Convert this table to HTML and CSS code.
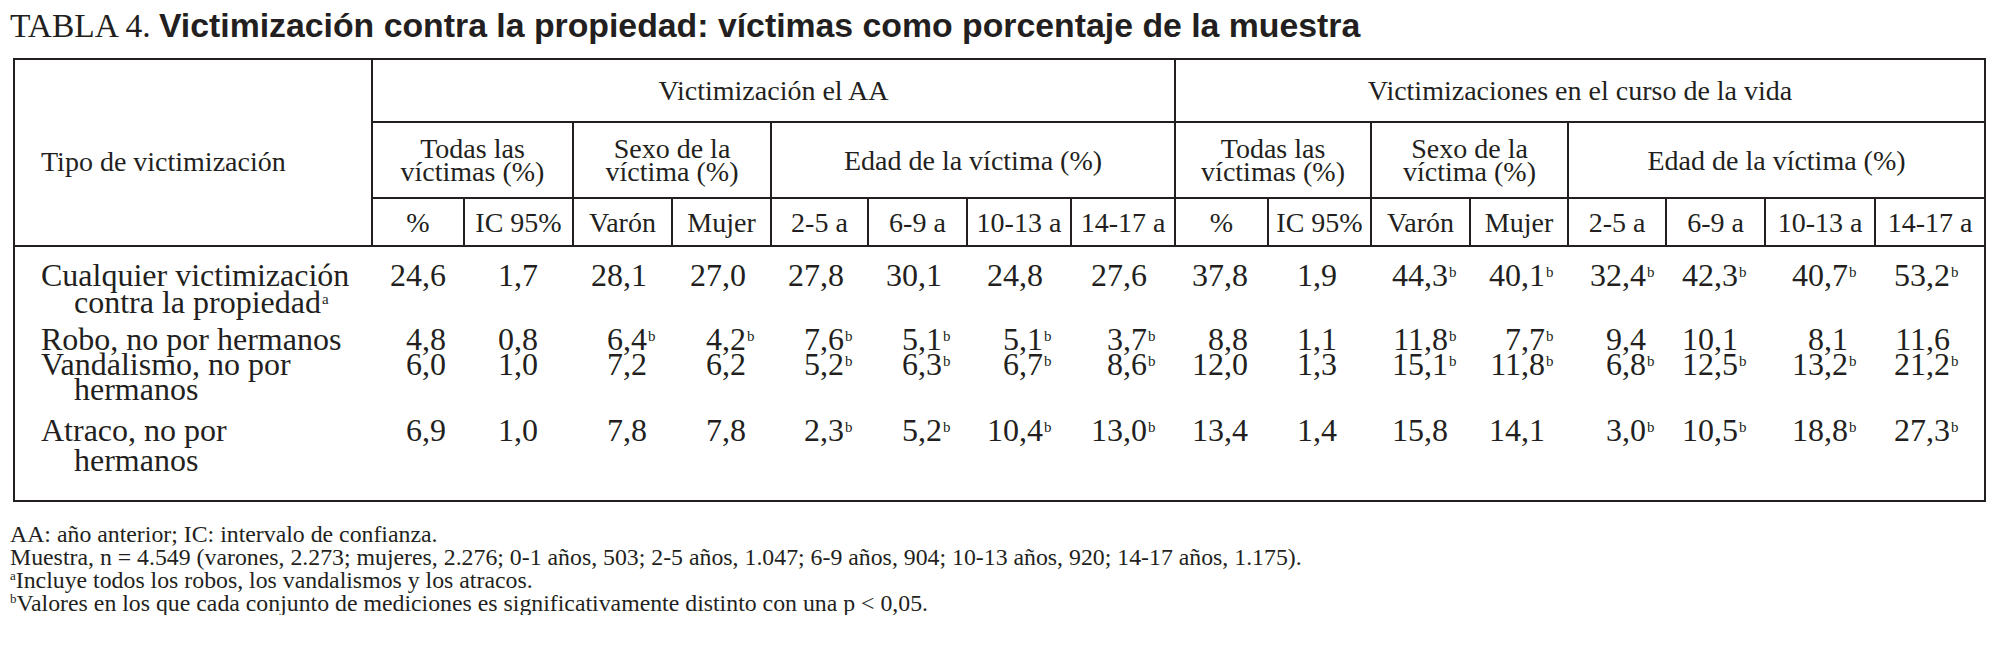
FILE: index.html
```html
<!DOCTYPE html>
<html lang="es">
<head>
<meta charset="utf-8">
<title>Tabla 4</title>
<link rel="stylesheet" href="styles.css">
</head>
<body>
<div class="page">
  <h1 class="title"><span class="tnum">TABLA 4.</span> <span class="tname">Victimización contra la propiedad: víctimas como porcentaje de la muestra</span></h1>
  <table class="data">
    <colgroup>
      <col class="w-lab">
      <col class="w92"><col class="w109"><col class="w99"><col class="w99">
      <col class="w97"><col class="w99"><col class="w104"><col class="w104">
      <col class="w93"><col class="w103"><col class="w99"><col class="w98">
      <col class="w98"><col class="w99"><col class="w110"><col class="w110">
    </colgroup>
    <thead>
      <tr class="h1">
        <th rowspan="3" class="tipo">Tipo de victimización</th>
        <th colspan="8">Victimización el AA</th>
        <th colspan="8">Victimizaciones en el curso de la vida</th>
      </tr>
      <tr class="h2">
        <th colspan="2">Todas las<br>víctimas (%)</th>
        <th colspan="2">Sexo de la<br>víctima (%)</th>
        <th colspan="4">Edad de la víctima (%)</th>
        <th colspan="2">Todas las<br>víctimas (%)</th>
        <th colspan="2">Sexo de la<br>víctima (%)</th>
        <th colspan="4">Edad de la víctima (%)</th>
      </tr>
      <tr class="h3">
        <th>%</th><th>IC 95%</th><th>Varón</th><th>Mujer</th>
        <th>2-5 a</th><th>6-9 a</th><th>10-13 a</th><th>14-17 a</th>
        <th>%</th><th>IC 95%</th><th>Varón</th><th>Mujer</th>
        <th>2-5 a</th><th>6-9 a</th><th>10-13 a</th><th>14-17 a</th>
      </tr>
    </thead>
    <tbody>
      <tr class="r1">
        <td class="lab">Cualquier victimización<br>contra la propiedad<sup class="sl">a</sup></td>
        <td>24,6</td><td>1,7</td><td>28,1</td><td>27,0</td>
        <td>27,8</td><td>30,1</td><td>24,8</td><td>27,6</td>
        <td>37,8</td><td>1,9</td><td>44,3<sup class="s">b</sup></td><td>40,1<sup class="s">b</sup></td>
        <td>32,4<sup class="s">b</sup></td><td>42,3<sup class="s">b</sup></td><td>40,7<sup class="s">b</sup></td><td>53,2<sup class="s">b</sup></td>
      </tr>
      <tr class="r2">
        <td class="lab">Robo, no por hermanos</td>
        <td>4,8</td><td>0,8</td><td>6,4<sup class="s">b</sup></td><td>4,2<sup class="s">b</sup></td>
        <td>7,6<sup class="s">b</sup></td><td>5,1<sup class="s">b</sup></td><td>5,1<sup class="s">b</sup></td><td>3,7<sup class="s">b</sup></td>
        <td>8,8</td><td>1,1</td><td>11,8<sup class="s">b</sup></td><td>7,7<sup class="s">b</sup></td>
        <td>9,4</td><td>10,1</td><td>8,1</td><td>11,6</td>
      </tr>
      <tr class="r3">
        <td class="lab">Vandalismo, no por<br>hermanos</td>
        <td>6,0</td><td>1,0</td><td>7,2</td><td>6,2</td>
        <td>5,2<sup class="s">b</sup></td><td>6,3<sup class="s">b</sup></td><td>6,7<sup class="s">b</sup></td><td>8,6<sup class="s">b</sup></td>
        <td>12,0</td><td>1,3</td><td>15,1<sup class="s">b</sup></td><td>11,8<sup class="s">b</sup></td>
        <td>6,8<sup class="s">b</sup></td><td>12,5<sup class="s">b</sup></td><td>13,2<sup class="s">b</sup></td><td>21,2<sup class="s">b</sup></td>
      </tr>
      <tr class="r4">
        <td class="lab">Atraco, no por<br>hermanos</td>
        <td>6,9</td><td>1,0</td><td>7,8</td><td>7,8</td>
        <td>2,3<sup class="s">b</sup></td><td>5,2<sup class="s">b</sup></td><td>10,4<sup class="s">b</sup></td><td>13,0<sup class="s">b</sup></td>
        <td>13,4</td><td>1,4</td><td>15,8</td><td>14,1</td>
        <td>3,0<sup class="s">b</sup></td><td>10,5<sup class="s">b</sup></td><td>18,8<sup class="s">b</sup></td><td>27,3<sup class="s">b</sup></td>
      </tr>
    </tbody>
  </table>
  <div class="notes">
    <p>AA: año anterior; IC: intervalo de confianza.</p>
    <p>Muestra, n = 4.549 (varones, 2.273; mujeres, 2.276; 0-1 años, 503; 2-5 años, 1.047; 6-9 años, 904; 10-13 años, 920; 14-17 años, 1.175).</p>
    <p><sup class="sn">a</sup>Incluye todos los robos, los vandalismos y los atracos.</p>
    <p><sup class="sn">b</sup>Valores en los que cada conjunto de mediciones es significativamente distinto con una p &lt; 0,05.</p>
  </div>
</div>
</body>
</html>
```

FILE: styles.css
```css
html, body {
  margin: 0;
  background: #ffffff;
}

body {
  color: #231f20;
  font-family: "Liberation Serif", "Times New Roman", serif;
}

.page {
  padding: 7px 0 0 13px;
}

.title {
  margin: 0 0 0 -3px;
  height: 36px;
  line-height: 36px;
  font-weight: normal;
  font-size: 33px;
  white-space: nowrap;
}

.tnum {
  font-family: "Liberation Serif", "Times New Roman", serif;
  font-size: 33.5px;
}

.tname {
  font-family: "Liberation Sans", Arial, sans-serif;
  font-weight: bold;
  font-size: 33.8px;
}

.data {
  margin-top: 15px;
  border-collapse: collapse;
  table-layout: fixed;
  width: 1973px;
  border: 2px solid #231f20;
  font-family: "Liberation Serif", "Times New Roman", serif;
  color: #231f20;
}

.w-lab { width: 358px; }
.w92 { width: 92px; }
.w93 { width: 93px; }
.w97 { width: 97px; }
.w98 { width: 98px; }
.w99 { width: 99px; }
.w103 { width: 103px; }
.w104 { width: 104px; }
.w109 { width: 109px; }
.w110 { width: 110px; }

.data th {
  border: 2px solid #231f20;
  font-weight: normal;
  font-size: 28px;
  line-height: 23px;
  padding: 0;
  text-align: center;
  vertical-align: middle;
  white-space: nowrap;
}

.data th.tipo {
  text-align: left;
  padding-left: 26px;
  padding-top: 18px;
}

.h1 th { height: 61px; }
.h2 th { height: 74px; }
.h3 th { height: 46px; }

.data td {
  font-size: 32px;
  line-height: 26px;
  padding: 0;
  text-align: right;
  vertical-align: top;
  white-space: nowrap;
}

.data td.lab {
  text-align: left;
  padding-left: 59px;
  text-indent: -33px;
}

.r1 td { padding-top: 15px; line-height: 27px; }
.r2 td { padding-top: 10px; }
.r3 td { padding-top: 0; line-height: 25px; }
.r4 td { padding-top: 13px; padding-bottom: 25px; line-height: 30px; }

.data td:nth-child(2) { padding-right: 18px; }
.data td:nth-child(3) { padding-right: 35px; }
.data td:nth-child(4) { padding-right: 25px; }
.data td:nth-child(5) { padding-right: 25px; }
.data td:nth-child(6) { padding-right: 24px; }
.data td:nth-child(7) { padding-right: 25px; }
.data td:nth-child(8) { padding-right: 28px; }
.data td:nth-child(9) { padding-right: 28px; }
.data td:nth-child(10) { padding-right: 20px; }
.data td:nth-child(11) { padding-right: 34px; }
.data td:nth-child(12) { padding-right: 22px; }
.data td:nth-child(13) { padding-right: 23px; }
.data td:nth-child(14) { padding-right: 20px; }
.data td:nth-child(15) { padding-right: 27px; }
.data td:nth-child(16) { padding-right: 27px; }
.data td:nth-child(17) { padding-right: 34px; }

.s {
  display: inline-block;
  width: 0;
  font-size: 15px;
  line-height: 0;
  vertical-align: 9px;
  text-indent: 1px;
}

.sl {
  font-size: 15px;
  line-height: 0;
  vertical-align: 9px;
  margin-left: 1px;
}

.notes {
  margin-top: 21px;
  margin-left: -3px;
  font-size: 23.8px;
  line-height: 23px;
}

.notes p {
  margin: 0;
  white-space: nowrap;
}

.sn {
  font-size: 13px;
  line-height: 0;
  vertical-align: 8px;
}
```
